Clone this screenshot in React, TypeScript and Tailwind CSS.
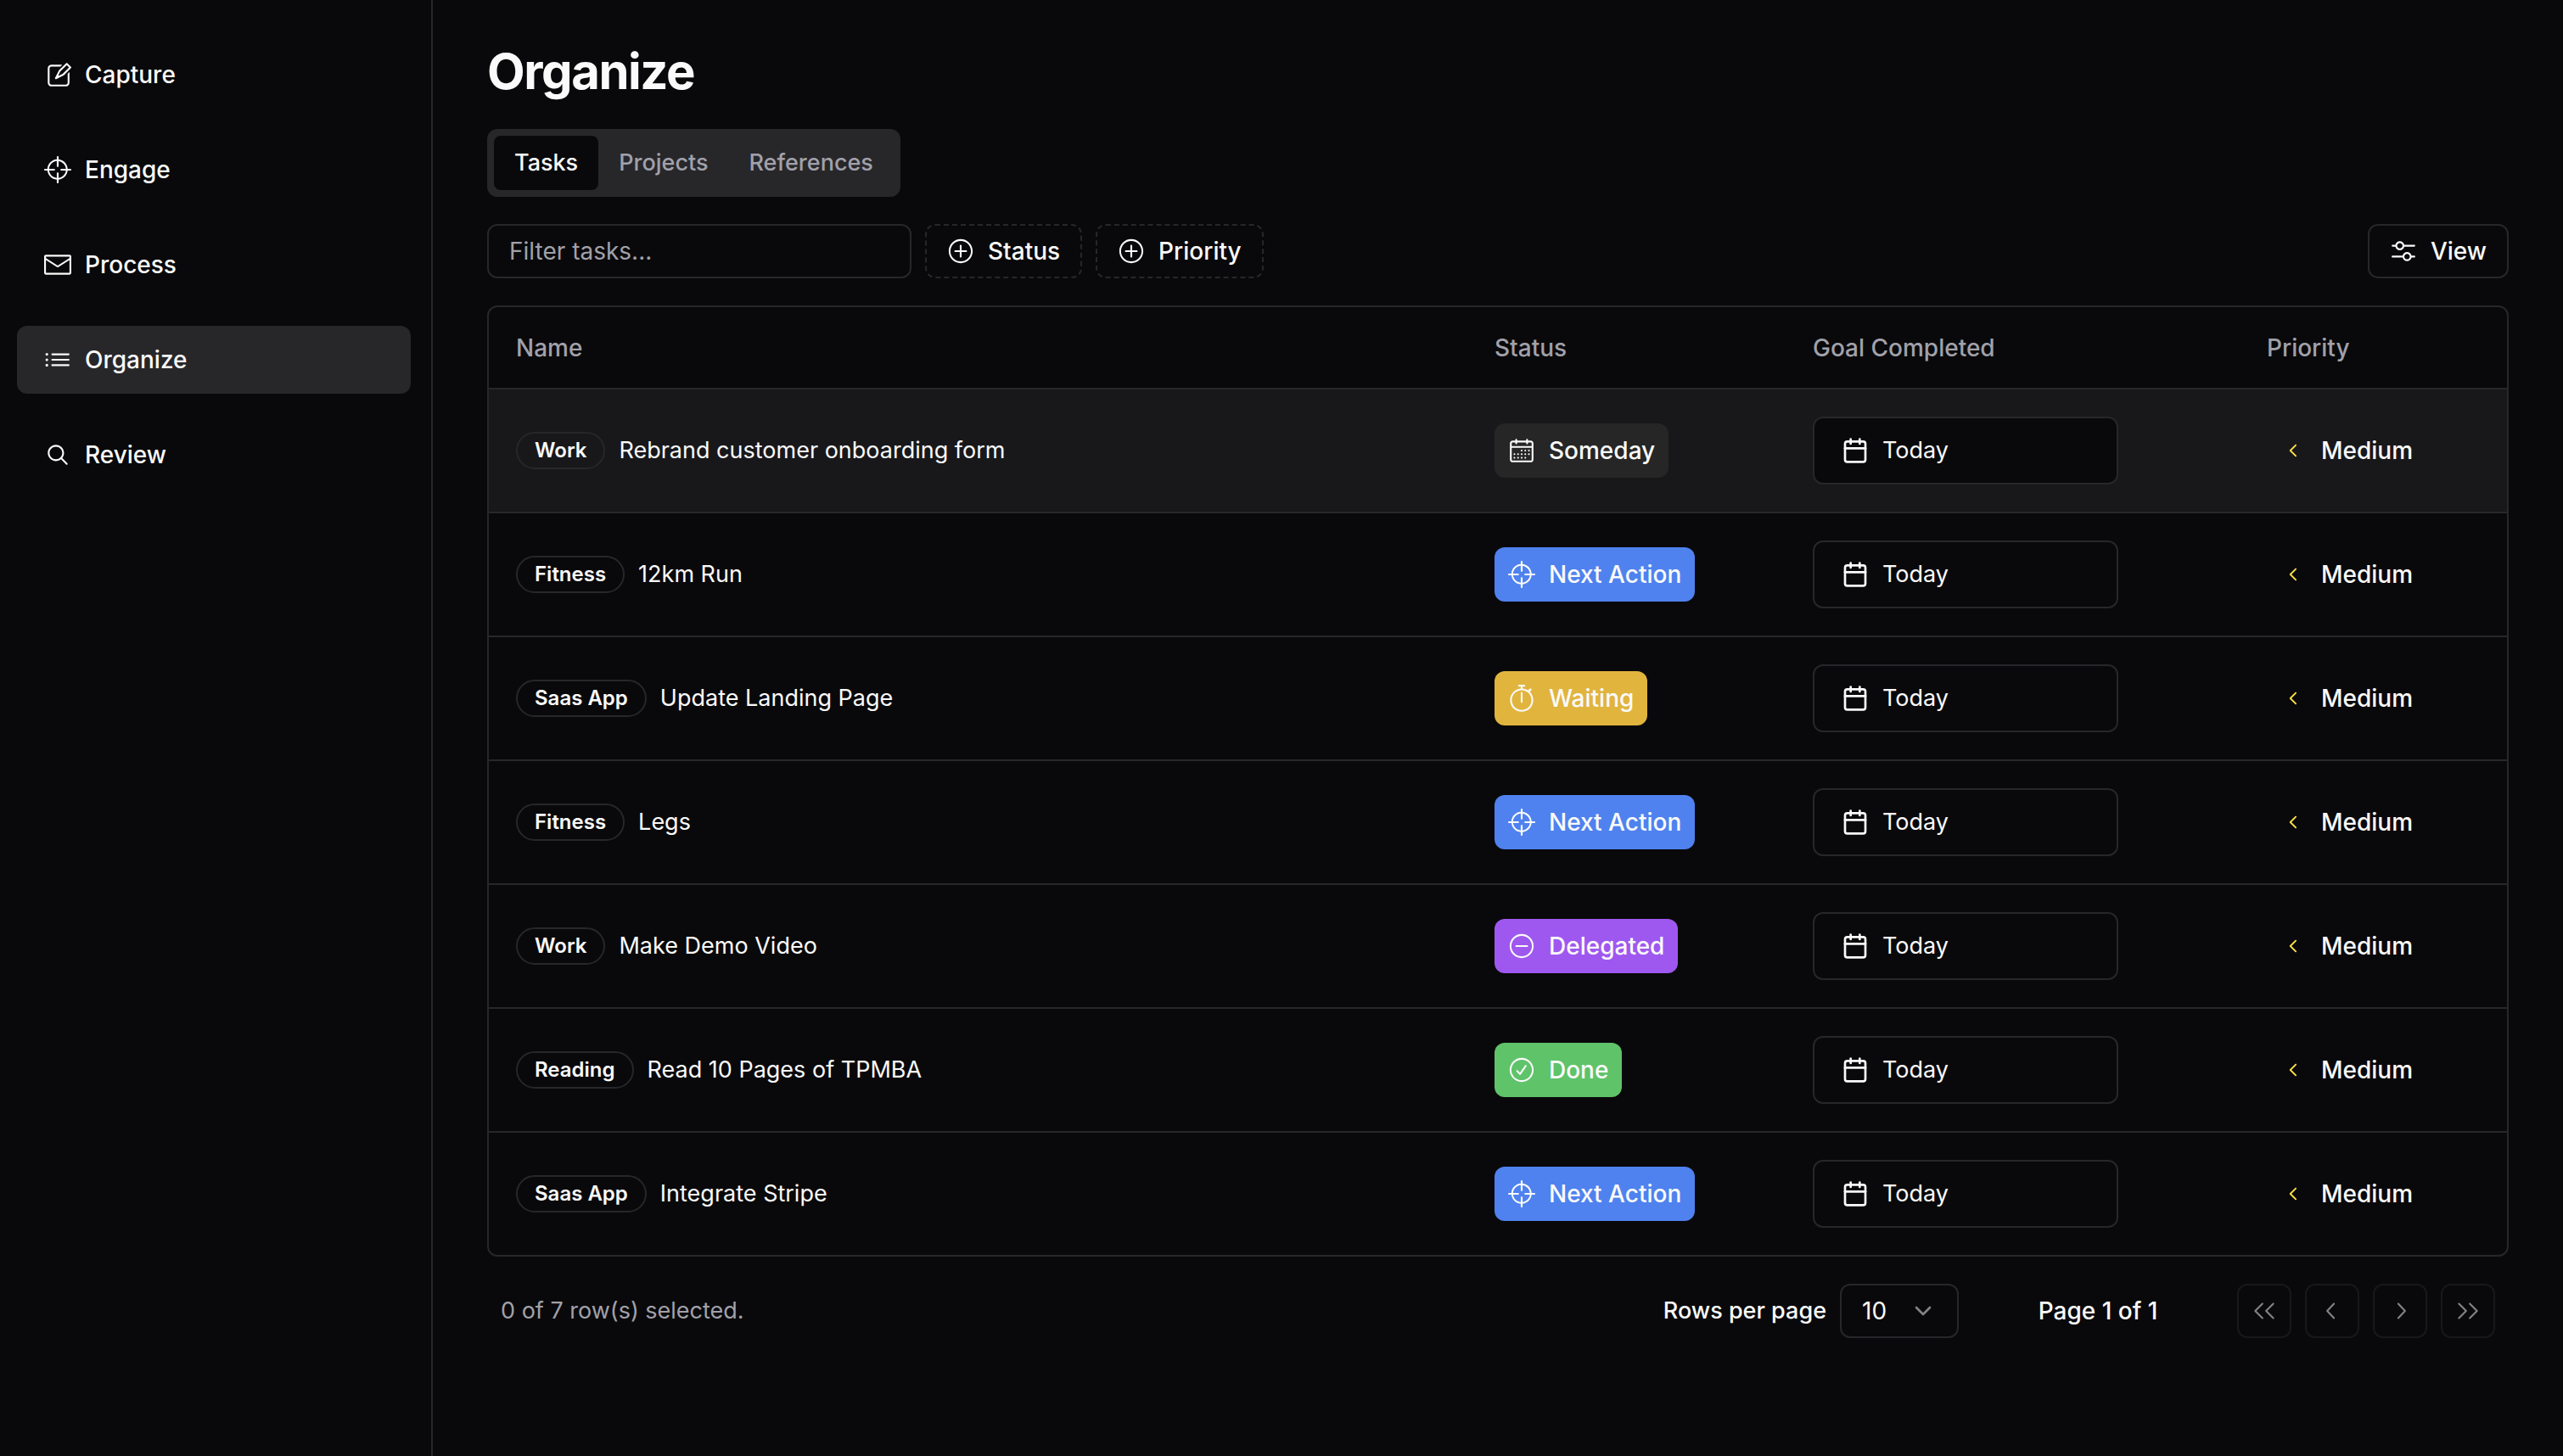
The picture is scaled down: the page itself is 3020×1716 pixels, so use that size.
import React from "react";
import { Calendar, ChevronDown } from "lucide-react";
import {
  RxCalendar,
  RxCaretLeft,
  RxCheckCircled,
  RxChevronLeft,
  RxChevronRight,
  RxCrosshair2,
  RxDoubleArrowLeft,
  RxDoubleArrowRight,
  RxEnvelopeClosed,
  RxListBullet,
  RxMagnifyingGlass,
  RxMinusCircled,
  RxMixerHorizontal,
  RxPencil2,
  RxPlusCircled,
  RxStopwatch,
} from "react-icons/rx";

type Icon = React.ComponentType<{ className?: string }>;

const navItems: { label: string; icon: Icon; active?: boolean }[] = [
  { label: "Capture", icon: RxPencil2 },
  { label: "Engage", icon: RxCrosshair2 },
  { label: "Process", icon: RxEnvelopeClosed },
  { label: "Organize", icon: RxListBullet, active: true },
  { label: "Review", icon: RxMagnifyingGlass },
];

const statuses = {
  someday: { label: "Someday", icon: RxCalendar, color: "bg-[#262626]" },
  next: { label: "Next Action", icon: RxCrosshair2, color: "bg-[#4f82ef]" },
  waiting: { label: "Waiting", icon: RxStopwatch, color: "bg-[#e1b43e]" },
  delegated: { label: "Delegated", icon: RxMinusCircled, color: "bg-[#9f58ef]" },
  done: { label: "Done", icon: RxCheckCircled, color: "bg-[#5fc36a]" },
};

const tasks: { area: string; name: string; status: keyof typeof statuses; highlighted?: boolean }[] = [
  { area: "Work", name: "Rebrand customer onboarding form", status: "someday", highlighted: true },
  { area: "Fitness", name: "12km Run", status: "next" },
  { area: "Saas App", name: "Update Landing Page", status: "waiting" },
  { area: "Fitness", name: "Legs", status: "next" },
  { area: "Work", name: "Make Demo Video", status: "delegated" },
  { area: "Reading", name: "Read 10 Pages of TPMBA", status: "done" },
  { area: "Saas App", name: "Integrate Stripe", status: "next" },
];

function Sidebar() {
  return (
    <aside className="w-[510px] shrink-0 border-r-2 border-[#27272a] py-12 pr-6 pl-5">
      <nav className="flex flex-col gap-8">
        {navItems.map(({ label, icon: Glyph, active }) => (
          <a
            key={label}
            href="#"
            aria-current={active ? "page" : undefined}
            className={
              active
                ? "flex h-20 items-center gap-4 rounded-xl bg-[#27272a] px-8 font-medium"
                : "flex h-20 items-center gap-4 rounded-xl px-8 font-medium"
            }
          >
            <Glyph className="size-8" />
            {label}
          </a>
        ))}
      </nav>
    </aside>
  );
}

function Tabs() {
  return (
    <div role="tablist" className="flex w-fit items-center rounded-xl bg-[#27272a] p-2 text-[27px] font-medium text-[#a1a1aa]">
      <button role="tab" aria-selected="true" className="h-16 rounded-lg bg-[#09090b] px-6 text-[#fafafa]">
        Tasks
      </button>
      <button role="tab" aria-selected="false" className="h-16 rounded-lg px-6">
        Projects
      </button>
      <button role="tab" aria-selected="false" className="h-16 rounded-lg px-6">
        References
      </button>
    </div>
  );
}

function FilterButton({ label }: { label: string }) {
  return (
    <button className="flex h-16 items-center gap-4 rounded-xl border-2 border-dashed border-[#27272a] px-6 font-medium">
      <RxPlusCircled className="size-8" />
      {label}
    </button>
  );
}

function Toolbar() {
  return (
    <div className="flex items-center justify-between">
      <div className="flex items-center gap-4">
        <input
          type="text"
          aria-label="Filter tasks"
          placeholder="Filter tasks..."
          className="h-16 w-[500px] rounded-xl border-2 border-[#27272a] bg-transparent px-6 placeholder:text-[#a1a1aa]"
        />
        <FilterButton label="Status" />
        <FilterButton label="Priority" />
      </div>
      <button className="flex h-16 items-center gap-4 rounded-xl border-2 border-[#27272a] px-6 font-medium">
        <RxMixerHorizontal className="size-8" />
        View
      </button>
    </div>
  );
}

function TaskTable() {
  return (
    <div className="rounded-xl border-2 border-[#27272a]">
      <table className="w-full table-fixed">
        <thead className="text-left text-[#a1a1aa]">
          <tr className="border-b-2 border-[#27272a]">
            <th className="h-24 px-8 font-medium">Name</th>
            <th className="w-[375px] px-8 font-medium">Status</th>
            <th className="w-[535px] px-8 font-medium">Goal Completed</th>
            <th className="w-[315px] px-8 font-medium">Priority</th>
          </tr>
        </thead>
        <tbody>
          {tasks.map((task) => {
            const status = statuses[task.status];
            const Glyph = status.icon;
            return (
              <tr
                key={task.name}
                className={
                  task.highlighted
                    ? "border-b-2 border-[#27272a] bg-[#18181b]"
                    : "border-b-2 border-[#27272a] last:border-b-0"
                }
              >
                <td className="p-8">
                  <div className="flex items-center gap-4">
                    <span className="rounded-full border-2 border-[#27272a] px-5 py-1 text-2xl font-semibold">
                      {task.area}
                    </span>
                    <span className="truncate text-[27px]">{task.name}</span>
                  </div>
                </td>
                <td className="p-8">
                  <div className={`flex h-16 w-fit items-center gap-4 rounded-xl px-4 font-medium ${status.color}`}>
                    <Glyph className="size-8" />
                    {status.label}
                  </div>
                </td>
                <td className="p-8">
                  <button className="flex h-20 w-90 items-center gap-4 rounded-xl border-2 border-[#27272a] bg-[#09090b] px-8 text-[27px]">
                    <Calendar className="size-8" />
                    Today
                  </button>
                </td>
                <td className="p-8">
                  <div className="flex items-center gap-4 pl-4 font-medium">
                    <RxCaretLeft className="size-8 text-[#fde047]" />
                    Medium
                  </div>
                </td>
              </tr>
            );
          })}
        </tbody>
      </table>
    </div>
  );
}

const pagers: { label: string; icon: Icon }[] = [
  { label: "Go to first page", icon: RxDoubleArrowLeft },
  { label: "Go to previous page", icon: RxChevronLeft },
  { label: "Go to next page", icon: RxChevronRight },
  { label: "Go to last page", icon: RxDoubleArrowRight },
];

function Pagination() {
  return (
    <div className="flex items-center justify-between px-4">
      <p className="text-[27px] text-[#a1a1aa]">0 of 7 row(s) selected.</p>
      <div className="flex items-center gap-16 font-medium">
        <div className="flex items-center gap-4">
          <label htmlFor="rows-per-page" className="text-[27px]">
            Rows per page
          </label>
          <div className="relative">
            <select
              id="rows-per-page"
              defaultValue="10"
              className="h-16 w-35 appearance-none rounded-xl border-2 border-[#27272a] bg-transparent px-6 font-normal"
            >
              <option value="10">10</option>
              <option value="20">20</option>
              <option value="50">50</option>
            </select>
            <ChevronDown className="pointer-events-none absolute top-4 right-[26px] size-8 opacity-50" />
          </div>
        </div>
        <p className="w-[200px] text-center">Page 1 of 1</p>
        <div className="flex items-center gap-4">
          {pagers.map(({ label, icon: Glyph }) => (
            <button
              key={label}
              disabled
              aria-label={label}
              className="flex size-16 items-center justify-center rounded-xl border-2 border-[#27272a] opacity-50"
            >
              <Glyph className="size-8" />
            </button>
          ))}
        </div>
      </div>
    </div>
  );
}

export default function App() {
  return (
    <div className="flex min-h-screen bg-[#09090b] font-['Inter',sans-serif] text-[28px] leading-10 text-[#fafafa]">
      <Sidebar />
      <main className="flex min-w-0 flex-1 flex-col gap-8 px-16 py-12">
        <h1 className="text-[58px] leading-[72px] font-bold tracking-tight">Organize</h1>
        <Tabs />
        <Toolbar />
        <TaskTable />
        <Pagination />
      </main>
    </div>
  );
}
